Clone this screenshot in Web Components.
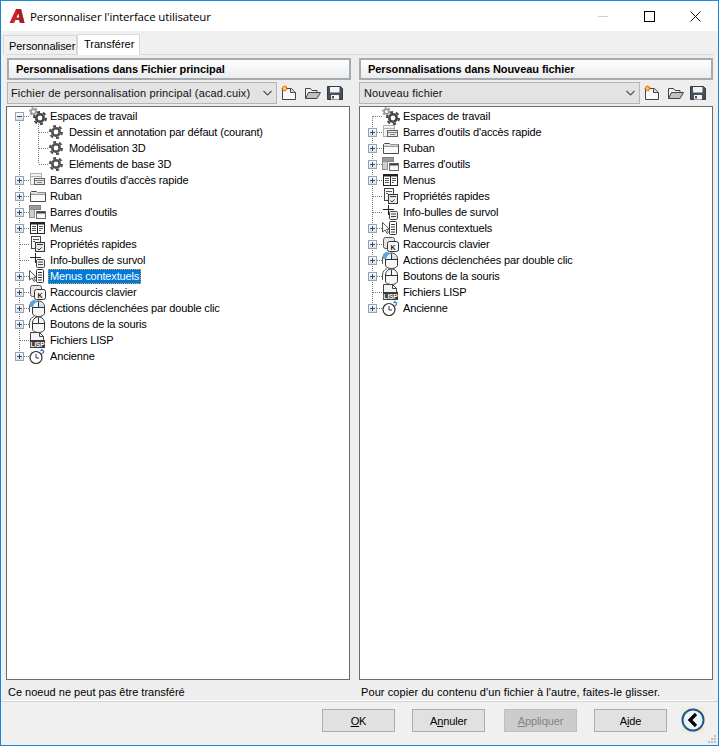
<!DOCTYPE html>
<html lang="fr">
<head>
<meta charset="utf-8">
<title>Personnaliser l'interface utilisateur</title>
<style>
  html, body { margin: 0; padding: 0; background: #f0f0f0; }
  body { font: 11px "Liberation Sans", Arial, sans-serif; color: #000; }
</style>
</head>
<body>
<cui-window>
  <title-bar slot="title">Personnaliser l'interface utilisateur</title-bar>
  <tab-strip slot="tabs"></tab-strip>
  <transfer-pane slot="left" heading="Personnalisations dans Fichier principal" file="Fichier de personnalisation principal (acad.cuix)" status="Ce noeud ne peut pas être transféré" style="--inset:1px;--tools:74px;--tree-w:344px;--combo-pad:3px">
    <tree-row toggle="minus" pos="first" icon="workspace">Espaces de travail</tree-row>
    <tree-row depth="1" icon="gear">Dessin et annotation par défaut (courant)</tree-row>
    <tree-row depth="1" icon="gear">Modélisation 3D</tree-row>
    <tree-row depth="1" pos="last" icon="gear">Eléments de base 3D</tree-row>
    <tree-row toggle="plus" icon="quick">Barres d'outils d'accès rapide</tree-row>
    <tree-row toggle="plus" icon="ribbon">Ruban</tree-row>
    <tree-row toggle="plus" icon="toolbars">Barres d'outils</tree-row>
    <tree-row toggle="plus" icon="menus">Menus</tree-row>
    <tree-row icon="props">Propriétés rapides</tree-row>
    <tree-row icon="tips">Info-bulles de survol</tree-row>
    <tree-row toggle="plus" icon="context" selected>Menus contextuels</tree-row>
    <tree-row toggle="plus" icon="keys">Raccourcis clavier</tree-row>
    <tree-row toggle="plus" icon="dblclick">Actions déclenchées par double clic</tree-row>
    <tree-row toggle="plus" icon="mouse">Boutons de la souris</tree-row>
    <tree-row icon="lisp">Fichiers LISP</tree-row>
    <tree-row toggle="plus" pos="last" icon="legacy">Ancienne</tree-row>
  </transfer-pane>
  <transfer-pane slot="right" heading="Personnalisations dans Nouveau fichier" file="Nouveau fichier" status="Pour copier du contenu d'un fichier à l'autre, faites-le glisser." style="--inset:0px;--tools:73px;--tree-w:354px;--status-gap:.09px;--combo-pad:4px">
    <tree-row pos="first" icon="workspace">Espaces de travail</tree-row>
    <tree-row toggle="plus" icon="quick">Barres d'outils d'accès rapide</tree-row>
    <tree-row toggle="plus" icon="ribbon">Ruban</tree-row>
    <tree-row toggle="plus" icon="toolbars">Barres d'outils</tree-row>
    <tree-row toggle="plus" icon="menus">Menus</tree-row>
    <tree-row icon="props">Propriétés rapides</tree-row>
    <tree-row icon="tips">Info-bulles de survol</tree-row>
    <tree-row toggle="plus" icon="context">Menus contextuels</tree-row>
    <tree-row toggle="plus" icon="keys">Raccourcis clavier</tree-row>
    <tree-row toggle="plus" icon="dblclick">Actions déclenchées par double clic</tree-row>
    <tree-row toggle="plus" icon="mouse">Boutons de la souris</tree-row>
    <tree-row icon="lisp">Fichiers LISP</tree-row>
    <tree-row toggle="plus" pos="last" icon="legacy">Ancienne</tree-row>
  </transfer-pane>
  <dialog-footer slot="footer"></dialog-footer>
</cui-window>

<script>
const gear = (cx, cy, r, color) => `
  <circle cx="${cx}" cy="${cy}" r="${r * 0.86}" fill="none" stroke="${color}" stroke-width="${r * 0.3}" pathLength="12" stroke-dasharray="1 1"/>
  <circle cx="${cx}" cy="${cy}" r="${r * 0.53}" fill="#fff" stroke="${color}" stroke-width="${r * 0.38}"/>`;

const treeIcons = {
  gear: gear(8, 8, 7, "#505050"),
  workspace: gear(4.5, 3.5, 4.5, "#999") + gear(11, 10, 7, "#484848"),
  quick: `
    <rect x="1.500" y="1.500" width="11" height="11" fill="#f4f4f4" stroke="#b0b0b0"/>
    <path d="M2 4.500h10" stroke="#b0b0b0"/>
    <rect x="5.500" y="6.500" width="10" height="6" fill="#e8e8e8" stroke="#606060"/>
    <path d="M6 8.500h9M8 10.500h5" stroke="#808080"/>`,
  ribbon: `
    <path d="M1.500 13.500v-9l1-1h5l1 1h8v9z" fill="#fbfbfb" stroke="#4a4a4a"/>
    <rect x="2" y="4.500" width="14" height="2" fill="#d8d8d8"/>
    <path d="M2 6.500h14" stroke="#9a9a9a"/>`,
  toolbars: `
    <rect x=".5" y="1.500" width="11" height="4" fill="#9a9a9a" stroke="#808080"/>
    <rect x=".5" y="5.500" width="5" height="8" fill="#cfcfcf" stroke="#909090"/>
    <rect x="7.500" y="7.500" width="9" height="7" fill="#f7f7f7" stroke="#6a6a6a"/>
    <path d="M8 8.500h8" stroke="#404040" stroke-width="2"/>`,
  menus: `
    <rect x="1.500" y="2.500" width="14" height="11" fill="#fff" stroke="#222"/>
    <path d="M2 3.500h13" stroke="#222" stroke-width="2"/>
    <path d="M8.500 3v10" stroke="#222"/>
    <path d="M3 6.500h4M3 8.500h4M3 10.500h4M10 6.500h4M10 8.500h4M10 10.500h2" stroke="#555"/>`,
  props: `
    <rect x="2.500" y="0.500" width="9" height="12" fill="#f6f6f6" stroke="#444"/>
    <path d="M4 3.500h6M4 5.500h2" stroke="#555"/>
    <rect x="6.500" y="6.500" width="9" height="9" fill="#e8e8e8" stroke="#333"/>
    <path d="M8 8.500h6" stroke="#333"/>
    <path d="M8.500 12.500l1.500 1.500 2.500-2.500" fill="none" stroke="#333"/>`,
  tips: `
    <path d="M6.500 1v10M1 5.500h11" stroke="#222"/>
    <rect x="7.500" y="7.500" width="8" height="8" rx="1" fill="#eee" stroke="#444"/>
    <path d="M9 10h5M9 12.500h5" stroke="#444"/>`,
  context: `
    <path d="M.5 2.500v9.500l2.500-2 2 3.500 1.500-1-2-3.200h3z" fill="#fff" stroke="#555"/>
    <rect x="7.500" y="1.500" width="7" height="13" rx="1" fill="#fff" stroke="#333"/>
    <path d="M9 4.500h4M9 7h4M9 9.500h4M9 12h4" stroke="#333"/>`,
  keys: `
    <rect x="1.500" y="1.500" width="11" height="11" rx="2" fill="#e6e6e6" stroke="#555"/>
    <rect x="5.500" y="5.500" width="11" height="10" rx="2" fill="#f4f4f4" stroke="#333"/>
    <text x="11" y="13.500" text-anchor="middle" font-family="Liberation Sans, sans-serif" font-weight="bold" font-size="7" fill="#222">K</text>`,
  dblclick: `
    <path d="M.5 12V7c0-3 1.800-5.500 4.500-6.500" fill="none" stroke="#555"/>
    <path d="M3.500 13V7c0-3.300 2.500-6 6-6s6 2.700 6 6v6c0 2-2.500 3.500-6 3.500s-6-1.500-6-3.500z" fill="#f6f6f6" stroke="#333"/>
    <path d="M4 7.500h11M9.500 1.500v6" stroke="#333"/>
    <path d="M1 2.500c1-1.500 2.500-2.500 5-2.500l2 2c-2 .5-3.500 2.500-4 5H1z" fill="#5aa5e6"/>
    <path d="M10 2.500c2 0 4.500 1.500 5 4.500h-5z" fill="#cfe3f5"/>`,
  mouse: `
    <path d="M.5 12V7c0-3 1.800-5.500 4.500-6.500" fill="none" stroke="#555"/>
    <path d="M3.500 13V7c0-3.300 2.500-6 6-6s6 2.700 6 6v6c0 2-2.500 3.500-6 3.500s-6-1.500-6-3.500z" fill="#f6f6f6" stroke="#333"/>
    <path d="M4 7.500h11M9.500 1.500v6" stroke="#333"/>`,
  lisp: `
    <path d="M1.500 .5h9l4 4v5h-13z" fill="#f4f4f4" stroke="#444"/>
    <path d="M10.500 .5v4h4" fill="none" stroke="#444"/>
    <rect x="1" y="8" width="15" height="8" fill="#3b3b3b"/>
    <text x="8.500" y="14.500" text-anchor="middle" font-family="Liberation Sans, sans-serif" font-weight="bold" font-size="6.500" fill="#fff">LISP</text>`,
  legacy: `
    <circle cx="7" cy="9.500" r="6" fill="#fff" stroke="#333" stroke-width="1.200"/>
    <path d="M7 6v4h3" fill="none" stroke="#333"/>
    <path d="M12.500 6c1.500-.5 2.500-1.500 2-3.500M11.500 3l1.500-1.500 1 1.500" fill="none" stroke="#2b7fd0" stroke-width="1.200"/>`
};

class CuiWindow extends HTMLElement {
  constructor() {
    super();
    this.attachShadow({ mode: "open" }).innerHTML = `
      <style>
        :host { display: flex; flex-direction: column; box-sizing: border-box; width: 719px; height: 746px; border: 1px solid #1883d7; border-top-color: #1f8ae0; background: #f0f0f0; overflow: hidden; }
        .panel { height: 645px; margin: 0 4px 0 4px; border-top: 1px solid #d9d9d9; border-bottom: 1px solid #fff; display: grid; grid-template-columns: 345px 354px; column-gap: 8px; padding-left: 1px; background: #eeeeee; }
        .rule { height: 1px; background: #d4d4d4; }
      </style>
      <slot name="title"></slot>
      <slot name="tabs"></slot>
      <div class="panel"><slot name="left"></slot><slot name="right"></slot></div>
      <div class="rule"></div>
      <slot name="footer"></slot>`;
  }
}

class TitleBar extends HTMLElement {
  constructor() {
    super();
    this.attachShadow({ mode: "open" }).innerHTML = `
      <style>
        :host { display: flex; align-items: center; height: 30px; background: #fff; flex: none; }
        .logo { margin: 0 5px 0 8px; }
        .text { font: 11.5px "Open Sans", sans-serif; letter-spacing: -.15px; flex: 1; white-space: nowrap; }
        .controls { display: flex; align-items: center; }
        .controls span { display: flex; width: 46px; justify-content: center; }
      </style>
      <svg class="logo" width="16" height="16" viewBox="0 0 16 16">
        <path d="M.5 15 7 1h5l3.500 14h-4.500l-.5-3H6.500L5 15z" fill="#c3272b"/>
        <path d="M7 1h5l3.500 14h-4.500z" fill="#a81e22"/>
        <path d="M7.500 9.500h2.700l-.7-4z" fill="#fff"/>
      </svg>
      <span class="text"><slot></slot></span>
      <div class="controls">
        <span><svg width="10" height="10"><path d="M0 5.500h10" stroke="#cfcfcf"/></svg></span>
        <span><svg width="11" height="11"><rect x=".5" y=".5" width="10" height="10" fill="none" stroke="#000"/></svg></span>
        <span><svg width="11" height="11"><path d="M.5.5l10 10M10.500.5l-10 10" stroke="#111"/></svg></span>
      </div>`;
  }
}

class TabStrip extends HTMLElement {
  constructor() {
    super();
    this.attachShadow({ mode: "open" }).innerHTML = `
      <style>
        :host { display: flex; align-items: flex-end; height: 24px; padding-left: 2px; flex: none; margin-bottom: -1px; position: relative; z-index: 1; }
        .tab { box-sizing: border-box; font: 11px "Liberation Sans", sans-serif; white-space: nowrap; }
        .off { width: 74px; height: 19px; padding: 4px 0 0 5px; background: #f0f0f0; border: 1px solid #d9d9d9; border-bottom: 0; margin-bottom: 1px; letter-spacing: -.08px; }
        .on { width: 63px; height: 21px; padding: 3px 0 0 6px; background: #fff; border: 1px solid #d9d9d9; border-bottom: 0; }
      </style>
      <div class="tab off">Personnaliser</div>
      <div class="tab on">Transférer</div>`;
  }
}

class TransferPane extends HTMLElement {
  constructor() {
    super();
    this.attachShadow({ mode: "open" }).innerHTML = `
      <style>
        :host { display: flex; flex-direction: column; padding-top: 3px; min-width: 0; }
        .head { box-sizing: border-box; height: 22px; margin-left: var(--inset); border: 2px solid #a3acb3; background: linear-gradient(#fff, #ececec); font: bold 11px "Liberation Sans", sans-serif; padding: 3px 0 0 7px; letter-spacing: -.07px; white-space: nowrap; }
        .bar { display: flex; height: 22px; margin: 2px 0 2px var(--inset); }
        .combo { box-sizing: border-box; flex: 1; min-width: 0; display: flex; align-items: center; justify-content: space-between; padding: 0 4px 0 var(--combo-pad); background: #e3e3e3; border: 1px solid #b5b5b5; font-size: 11px; letter-spacing: .14px; white-space: nowrap; color: #111; }
        .tools { width: var(--tools); display: flex; padding-left: 4px; box-sizing: border-box; gap: 6px; align-items: center; }
        .tree { box-sizing: border-box; width: var(--tree-w); height: 574px; background: #fff; border: 1px solid #6b6b6b; padding-top: 1px; }
        .status { height: 20px; padding: 6px 0 0 2px; box-sizing: border-box; font-size: 11px; letter-spacing: var(--status-gap, 0); white-space: nowrap; }
      </style>
      <div class="head"></div>
      <div class="bar">
        <div class="combo"><span class="file"></span>
          <svg width="9" height="6"><path d="M.5 1l4 4 4-4" fill="none" stroke="#555" stroke-width="1.200"/></svg></div>
        <div class="tools">
          <svg width="17" height="16" viewBox="0 0 17 16">
            <path d="M1.500 3.500h9l4 4v7h-13z" fill="#fbfbfb" stroke="#444"/>
            <path d="M9.500 3.500v4h5" fill="#ddd" stroke="#444"/>
            <circle cx="3.500" cy="3.500" r="2.200" fill="#ffd23c" stroke="#ea5a0c" stroke-width="1.400" stroke-dasharray="1.200 .6"/>
          </svg>
          <svg width="17" height="16" viewBox="0 0 17 16">
            <path d="M1.500 13.500v-10h5l1.500 2h5v2" fill="#f3f3f3" stroke="#444"/>
            <path d="M1.500 13.500l3-6h12l-3.500 6z" fill="#b9c2c8" stroke="#444"/>
          </svg>
          <svg width="16" height="16" viewBox="0 0 16 16">
            <path d="M.5 1.500h13l2 2v11H.5z" fill="#46505a" stroke="#333c44"/>
            <rect x="3" y="2" width="9.500" height="5.500" fill="#f4f4f4"/>
            <rect x="4" y="10" width="8" height="4.500" fill="#f4f4f4"/>
            <rect x="5" y="11" width="2" height="2.500" fill="#46505a"/>
          </svg>
        </div>
      </div>
      <div class="tree"><slot></slot></div>
      <div class="status"></div>`;
  }

  connectedCallback() {
    this.shadowRoot.querySelector(".head").textContent = this.getAttribute("heading");
    this.shadowRoot.querySelector(".file").textContent = this.getAttribute("file");
    this.shadowRoot.querySelector(".status").textContent = this.getAttribute("status");
  }
}

class TreeRow extends HTMLElement {
  constructor() {
    super();
    this.attachShadow({ mode: "open" });
  }

  connectedCallback() {
    const depth = Number(this.getAttribute("depth") || 0);
    const toggle = this.getAttribute("toggle");
    const pos = this.getAttribute("pos");
    const dots = 'stroke="#777" stroke-dasharray="1 1"';
    let lines = "";

    if (depth === 0) {
      const y1 = pos === "first" ? 8 : 0;
      const y2 = pos === "last" ? 8 : 16;
      lines += `<path d="M12.500 ${y1}V${y2}" ${dots}/>`;
      lines += `<path d="M${toggle ? 17 : 13} 8.500H22" ${dots}/>`;
    } else {
      const y2 = pos === "last" ? 8 : 16;
      lines += `<path d="M12.500 0V16" ${dots}/>`;
      lines += `<path d="M31.500 0V${y2}" ${dots}/>`;
      lines += `<path d="M32 8.500H41" ${dots}/>`;
    }

    let box = "";
    if (toggle) {
      box = `<rect x="8.500" y="4.500" width="8" height="8" fill="url(#b)" stroke="#9aa3aa"/>
        <path d="M10 8.500h5" stroke="#2a4a8c"/>
        ${toggle === "plus" ? '<path d="M12.500 6v5" stroke="#2a4a8c"/>' : ""}`;
    }

    const gutter = depth ? 41 : 22;
    const size = depth ? 16 : 18;
    const icon = treeIcons[this.getAttribute("icon")];
    this.shadowRoot.innerHTML = `
      <style>
        :host { display: flex; height: 16px; align-items: center; white-space: nowrap; font: 11px "Liberation Sans", sans-serif; letter-spacing: -.15px; }
        svg { flex: none; overflow: visible; }
        .label { margin-left: ${depth ? 3 : 1}px; padding: 0 2px; line-height: 15px; height: 15px; box-sizing: border-box; }
        :host([selected]) .label { background: #0078d7; color: #fff; outline: 1px dotted #e8a33c; outline-offset: -1px; }
      </style>
      <svg width="${gutter}" height="16">
        <defs><linearGradient id="b" x1="0" y1="0" x2="0" y2="1"><stop offset="0" stop-color="#fff"/><stop offset="1" stop-color="#d8dde2"/></linearGradient></defs>
        ${lines}${box}
      </svg>
      <svg width="${size}" height="16" viewBox="0 0 ${size} 16">${icon}</svg>
      <span class="label"><slot></slot></span>`;
  }
}

class DialogButton extends HTMLElement {
  constructor() {
    super();
    this.attachShadow({ mode: "open" }).innerHTML = `
      <style>
        :host { display: flex; box-sizing: border-box; width: 73px; height: 23px; align-items: center; justify-content: center; background: #e1e1e1; border: 1px solid #adadad; font: 11px "Liberation Sans", sans-serif; letter-spacing: -.1px; }
        :host([disabled]) { background: #cccccc; border-color: #bfbfbf; color: #838383; }
      </style>
      <slot></slot>`;
  }
}

class DialogFooter extends HTMLElement {
  constructor() {
    super();
    this.attachShadow({ mode: "open" }).innerHTML = `
      <style>
        :host { display: flex; flex: 1; align-items: flex-start; padding: 7px 0 0 321px; position: relative; }
        .gap { width: 17px; }
        .back { margin: -2px 0 0 14px; background: #f1ecd9; }
        .grip { position: absolute; right: 1px; bottom: 1px; }
        u { text-decoration-thickness: 1px; }
      </style>
      <dialog-button><span><u>O</u>K</span></dialog-button><div class="gap"></div>
      <dialog-button><span>A<u>n</u>nuler</span></dialog-button><div class="gap" style="width:19px"></div>
      <dialog-button disabled><span><u>A</u>ppliquer</span></dialog-button><div class="gap"></div>
      <dialog-button><span>A<u>i</u>de</span></dialog-button>
      <svg class="back" width="24" height="26" viewBox="0 0 24 26">
        <circle cx="12" cy="13" r="10.500" fill="#eef3f8" stroke="#1d5a92" stroke-width="2"/>
        <path d="M15 7l-6 6 6 6" fill="none" stroke="#000" stroke-width="3.200"/>
      </svg>
      <svg class="grip" width="10" height="10"><path d="M7 1h2v2H7zM4 4h2v2H4zM7 4h2v2H7zM1 7h2v2H1zM4 7h2v2H4zM7 7h2v2H7z" fill="#bdbdbd"/></svg>`;
  }
}

customElements.define("cui-window", CuiWindow);
customElements.define("title-bar", TitleBar);
customElements.define("tab-strip", TabStrip);
customElements.define("transfer-pane", TransferPane);
customElements.define("tree-row", TreeRow);
customElements.define("dialog-button", DialogButton);
customElements.define("dialog-footer", DialogFooter);
</script>
</body>
</html>
